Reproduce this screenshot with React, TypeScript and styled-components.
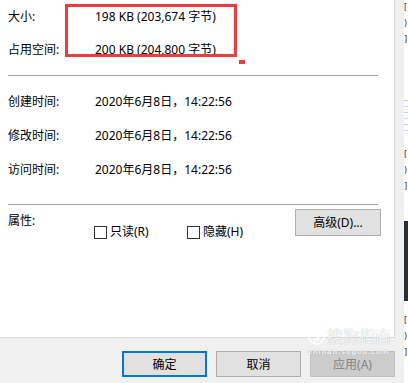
import React from "react";
import styled, { createGlobalStyle } from "styled-components";

const GlobalStyle = createGlobalStyle`
  html, body {
    margin: 0;
    padding: 0;
  }
  body {
    width: 408px;
    height: 383px;
    overflow: hidden;
    background: #f0f0f0;
    font-family: "Noto Sans", "Noto Sans CJK SC", sans-serif;
    font-size: 12px;
    color: #000;
  }
`;

const Screen = styled.div`
  display: flex;
  width: 408px;
  height: 383px;
`;

const Dialog = styled.div`
  position: relative;
  width: 404px;
  display: flex;
  flex-direction: column;
  background: #f0f0f0;
`;

const Panel = styled.div`
  position: relative;
  box-sizing: border-box;
  width: 395px;
  height: 338px;
  padding: 1px 0 0 8px;
  background: #fff;
  border-right: 1px solid #d9d9d9;
  border-bottom: 1px solid #d9d9d9;
`;

const Group = styled.div<{ top?: number; gap?: number }>`
  display: flex;
  flex-direction: column;
  gap: ${(p) => p.gap ?? 0}px;
  margin-top: ${(p) => p.top ?? 0}px;
`;

const Row = styled.div<{ h: number }>`
  display: flex;
  align-items: center;
  height: ${(p) => p.h}px;
  line-height: 16px;
`;

const Label = styled.span<{ w?: number }>`
  flex: none;
  width: ${(p) => p.w ?? 87}px;
`;

const Value = styled.span`
  white-space: nowrap;
`;

const Separator = styled.div<{ top: number }>`
  height: 1px;
  margin: ${(p) => p.top}px 16px 0 0;
  background: #a0a0a0;
`;

const AttrRow = styled.div`
  display: flex;
  align-items: flex-start;
  padding: 4px 13px 0 0;
  line-height: 16px;
`;

const AttrLabel = styled.span`
  flex: none;
  width: 86px;
  margin-top: 4px;
`;

const Check = styled.label<{ w?: number }>`
  display: flex;
  align-items: center;
  gap: 3px;
  width: ${(p) => (p.w ? `${p.w}px` : "auto")};
  height: 16px;
  margin-top: 15px;
  white-space: nowrap;
`;

const Box = styled.span`
  box-sizing: border-box;
  width: 13px;
  height: 13px;
  border: 1px solid #333;
  background: #fff;
`;

const PlainButton = styled.div`
  box-sizing: border-box;
  display: flex;
  align-items: center;
  justify-content: center;
  width: 86px;
  height: 27px;
  margin-left: auto;
  background: #e1e1e1;
  border: 1px solid #adadad;
`;

const Highlight = styled.div`
  position: absolute;
  left: 65px;
  top: 4px;
  box-sizing: border-box;
  width: 172px;
  height: 53px;
  border: 3px solid #f03c3c;
`;

const Dot = styled.div`
  position: absolute;
  left: 239px;
  top: 60px;
  width: 6px;
  height: 4px;
  background: #f03c3c;
`;

const ButtonBar = styled.div`
  display: flex;
  gap: 9px;
  padding: 13px 0 0 122px;
`;

type Kind = "default" | "normal" | "disabled";

const DialogButton = styled.div<{ kind: Kind }>`
  box-sizing: border-box;
  display: flex;
  align-items: center;
  justify-content: center;
  width: 85px;
  height: 26px;
  background: ${(p) => (p.kind === "disabled" ? "#cccccc" : "#e1e1e1")};
  color: ${(p) => (p.kind === "disabled" ? "#838383" : "#000")};
  border: ${(p) =>
    p.kind === "default"
      ? "2px solid #0078d7"
      : p.kind === "disabled"
      ? "1px solid #bfbfbf"
      : "1px solid #adadad"};
`;

const Watermark = styled.div`
  position: absolute;
  left: 308px;
  top: 327px;
  display: flex;
  flex-direction: column;
  align-items: flex-start;
  color: rgba(255, 255, 255, 0.9);
  text-shadow: 0 0 1px rgba(0, 0, 0, 0.3);
  pointer-events: none;
`;

const MarkTop = styled.div`
  display: flex;
  align-items: center;
  gap: 2px;
  font-size: 16px;
  line-height: 18px;
`;

const MarkSub = styled.div`
  margin-top: 4px;
  font-family: "DejaVu Sans", sans-serif;
  font-size: 7px;
  font-weight: bold;
  letter-spacing: 0.6px;
  line-height: 7px;
`;

const SideStrip = styled.div`
  width: 4px;
  height: 383px;
  overflow: hidden;
  background: #fff;
  display: flex;
  flex-direction: column;
`;

const Frags = styled.div<{ top: number }>`
  display: flex;
  flex-direction: column;
  margin-top: ${(p) => p.top}px;
  font-family: "DejaVu Sans", sans-serif;
  font-size: 8px;
  line-height: 16px;
  color: #222;
`;

const Lines = styled.div<{ top: number }>`
  height: 38px;
  margin-top: ${(p) => p.top}px;
  background: repeating-linear-gradient(
    to bottom,
    #fff 0 5px,
    #c9cdf0 5px 6px
  );
`;

const DarkBlock = styled.div<{ top: number }>`
  height: 80px;
  margin-top: ${(p) => p.top}px;
  background: #2a2d33;
`;

const SogouLogo = () => (
  <svg width="17" height="17" viewBox="0 0 17 17">
    <circle cx="8.5" cy="8.5" r="7.5" fill="none" stroke="rgba(255,255,255,0.9)" strokeWidth="1.6" />
    <path
      d="M11 5.5 C10 4.6 6.2 4.4 6.2 6.6 C6.2 8.6 10.8 8 10.8 10.4 C10.8 12.6 6.8 12.6 5.8 11.4"
      fill="none"
      stroke="rgba(255,255,255,0.9)"
      strokeWidth="1.8"
      strokeLinecap="round"
    />
  </svg>
);

const times = ["创建时间:", "修改时间:", "访问时间:"];

export default function App() {
  return (
    <>
      <GlobalStyle />
      <Screen>
        <Dialog>
          <Panel>
            <Group gap={1}>
              <Row h={32}>
                <Label>大小:</Label>
                <Value>198 KB (203,674 字节)</Value>
              </Row>
              <Row h={32}>
                <Label>占用空间:</Label>
                <Value>200 KB (204,800 字节)</Value>
              </Row>
            </Group>
            <Separator top={9} />
            <Group top={9}>
              {times.map((t) => (
                <Row h={34} key={t}>
                  <Label>{t}</Label>
                  <Value>2020年6月8日，14:22:56</Value>
                </Row>
              ))}
            </Group>
            <Separator top={17} />
            <AttrRow>
              <AttrLabel>属性:</AttrLabel>
              <Check w={93}>
                <Box />
                只读(R)
              </Check>
              <Check>
                <Box />
                隐藏(H)
              </Check>
              <PlainButton>高级(D)...</PlainButton>
            </AttrRow>
            <Highlight />
            <Dot />
          </Panel>
          <ButtonBar>
            <DialogButton kind="default">确定</DialogButton>
            <DialogButton kind="normal">取消</DialogButton>
            <DialogButton kind="disabled">应用(A)</DialogButton>
          </ButtonBar>
          <Watermark>
            <MarkTop>
              <SogouLogo />
              搜狗指南
            </MarkTop>
            <MarkSub>zhinan.sogou.com</MarkSub>
          </Watermark>
        </Dialog>
        <SideStrip>
          <Frags top={0}>
            <span>[</span>
            <span>)</span>
            <span>]</span>
          </Frags>
          <Lines top={47} />
          <Frags top={14}>
            <span>[</span>
            <span>)</span>
            <span>]</span>
          </Frags>
          <DarkBlock top={26} />
          <Frags top={12}>
            <span>[</span>
            <span>)</span>
            <span>]</span>
          </Frags>
        </SideStrip>
      </Screen>
    </>
  );
}
